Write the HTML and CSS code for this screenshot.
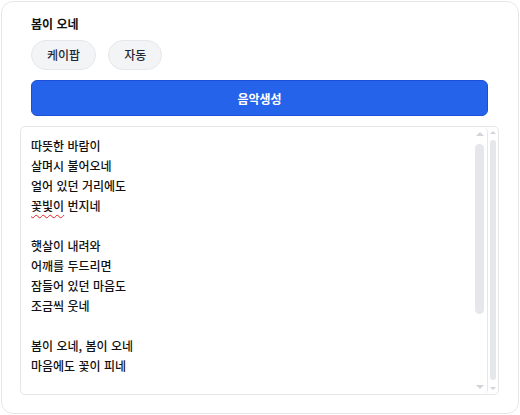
FILE: index.html
```html
<!DOCTYPE html>
<html lang="ko">
<head>
<meta charset="utf-8">
<link rel="stylesheet" href="styles.css">
</head>
<body>
<div class="card">
  <div class="title">봄이 오네</div>
  <div class="chips">
    <span class="chip">케이팝</span>
    <span class="chip">자동</span>
  </div>
  <button class="generate">음악생성</button>
  <div class="lyrics-box">
    <div class="lyrics-inner">
      <div class="lyrics">따뜻한 바람이<br>살며시 불어오네<br>얼어 있던 거리에도<br><span class="spell">꽃빛이</span> 번지네<br><br>햇살이 내려와<br>어깨를 두드리면<br>잠들어 있던 마음도<br>조금씩 웃네<br><br>봄이 오네, 봄이 오네<br>마음에도 꽃이 피네</div>
      <div class="sb sb-inner">
        <span class="arrow up"></span>
        <span class="thumb"></span>
        <span class="arrow down"></span>
      </div>
    </div>
    <div class="sb sb-outer">
      <span class="arrow up"></span>
      <span class="thumb"></span>
      <span class="arrow down"></span>
    </div>
  </div>
</div>
</body>
</html>
```
FILE: styles.css
```css
* { box-sizing: border-box; }
html, body { margin: 0; padding: 0; background: #fff; }
body {
  font-family: "Noto Sans CJK KR", "Noto Sans", sans-serif;
  color: #111827;
}
.card {
  margin: 1px 0 0 1px;
  width: 518px;
  height: 413px;
  border: 1px solid #e5e7eb;
  border-radius: 12px;
  padding: 13px 30px 18px 29px;
  display: flex;
  flex-direction: column;
}
.title {
  font-size: 12px;
  font-weight: 700;
  line-height: 18px;
  color: #111;
}
.chips {
  display: flex;
  gap: 12px;
  margin-top: 7px;
}
.chip {
  height: 30px;
  padding: 0 15px;
  border: 1px solid #e5e7eb;
  background: #f3f4f6;
  border-radius: 15px;
  font-size: 12px;
  font-weight: 500;
  line-height: 28px;
  color: #1f2937;
}
.generate {
  margin-top: 10px;
  height: 36px;
  border: 1px solid #1d4ed8;
  background: #2563eb;
  color: #fff;
  border-radius: 6px;
  font-family: inherit;
  font-size: 12px;
  font-weight: 700;
  width: 100%;
}
.lyrics-box {
  margin: 10px -11px 0;
  height: 269px;
  border: 1px solid #e5e7eb;
  border-radius: 5px;
  display: flex;
}
.lyrics-inner {
  flex: 1;
  display: flex;
  border-right: 1px solid #e5e7eb;
  border-radius: 0 5px 5px 0;
}
.lyrics {
  flex: 1;
  padding: 9px 10px;
  font-size: 12px;
  font-weight: 500;
  line-height: 20px;
  color: #111;
}
.spell {
  text-decoration: underline wavy #e02424;
  text-decoration-thickness: 1px;
  text-underline-offset: 3px;
}
.sb {
  display: flex;
  flex-direction: column;
  align-items: center;
}
.sb-inner {
  width: 11px;
  margin-right: 2px;
  padding: 5px 0 5px;
}
.sb-inner .thumb {
  width: 9px;
  height: 170px;
  border-radius: 5px;
  background: #e5e7eb;
  margin-top: 8px;
}
.sb-inner .arrow.down { margin-top: auto; }
.arrow {
  width: 0;
  height: 0;
  border-left: 4px solid transparent;
  border-right: 4px solid transparent;
}
.arrow.up { border-bottom: 4px solid #d1d5db; }
.arrow.down { border-top: 4px solid #d1d5db; }
.sb-outer {
  width: 10px;
  padding: 4px 0 4px;
}
.sb-outer .arrow { border-left-width: 3px; border-right-width: 3px; }
.sb-outer .arrow.up { border-bottom-width: 3px; }
.sb-outer .arrow.down { border-top-width: 3px; margin-top: auto; }
.sb-outer .thumb {
  width: 6px;
  height: 240px;
  border-radius: 3px;
  background: #e5e7eb;
  margin-top: 6px;
}
```
